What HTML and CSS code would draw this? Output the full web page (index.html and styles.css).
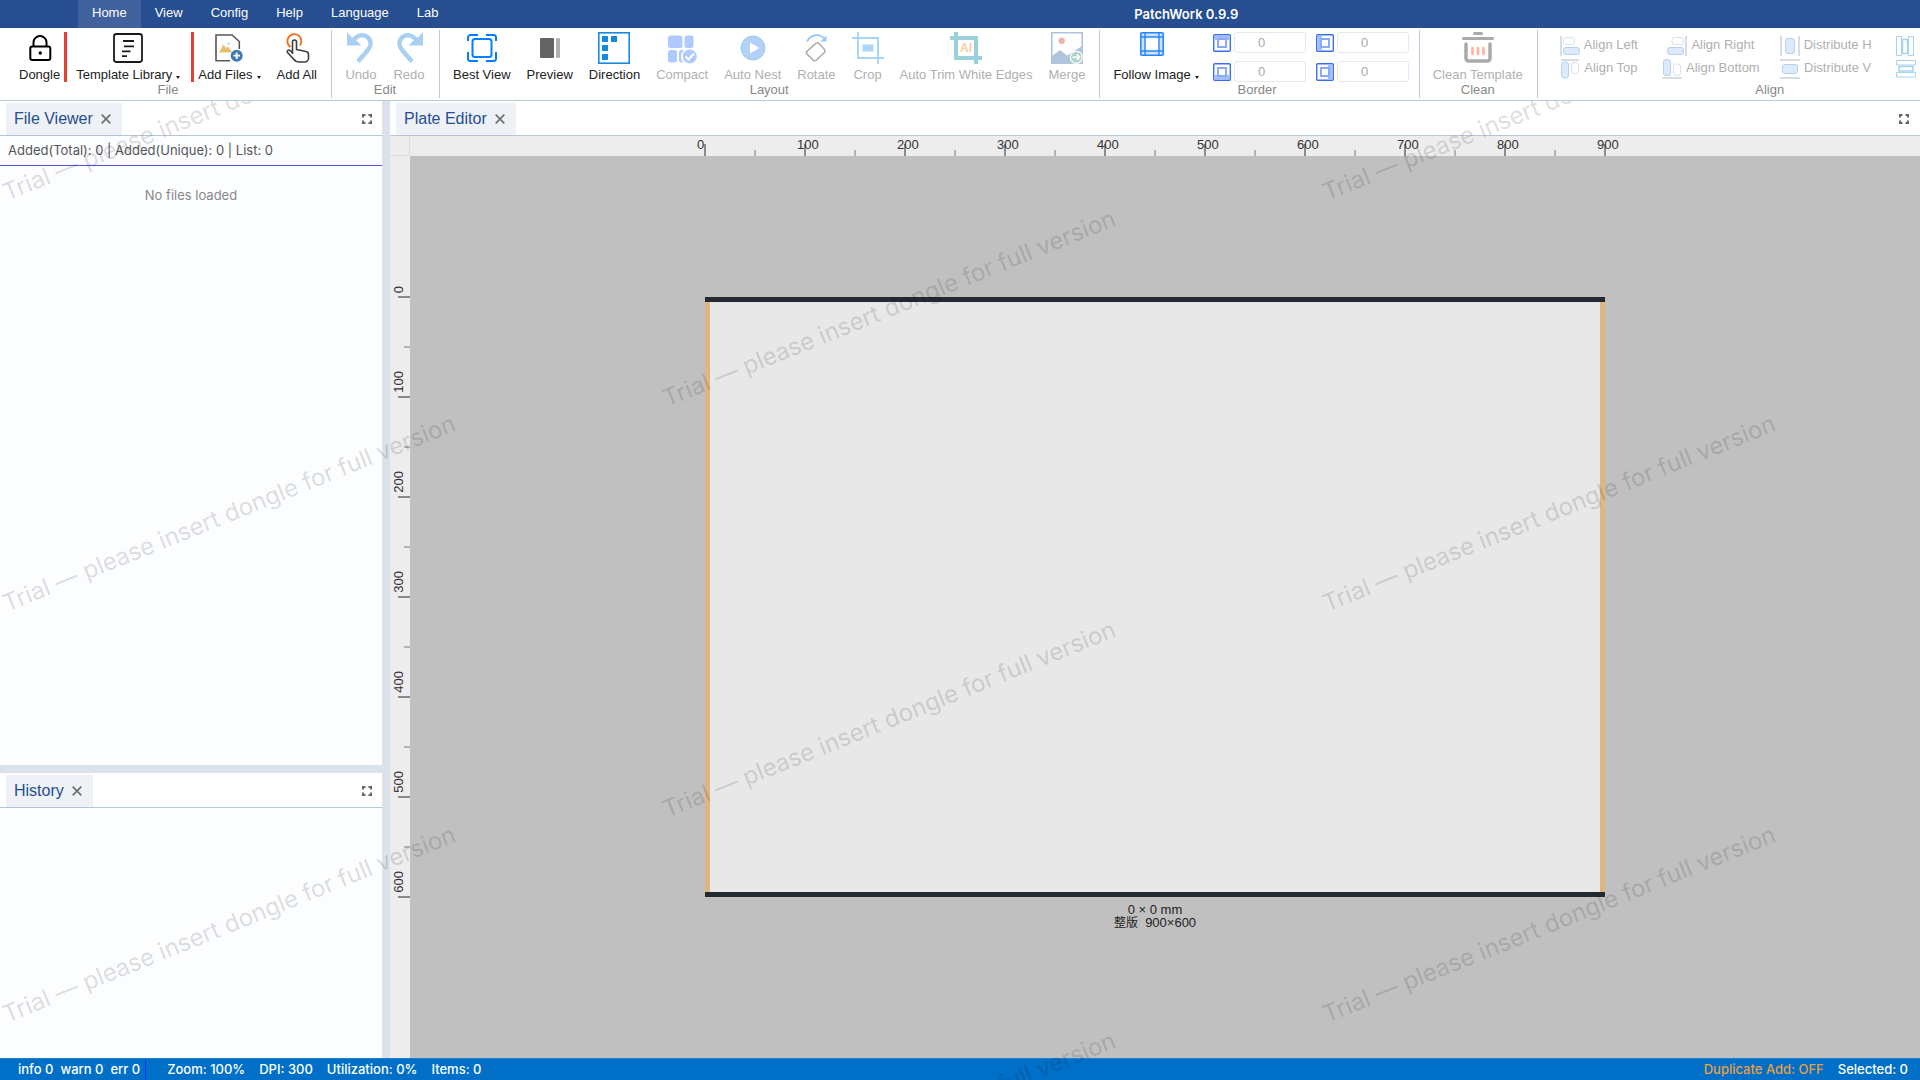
FILE: index.html
```html
<!DOCTYPE html>
<html lang="en">
	<head>
		<meta charset="utf-8">
		<title>PatchWork 0.9.9</title>
		<link rel="stylesheet" href="styles.css">
	</head>
	<body>
		<svg class="defs" aria-hidden="true">
			<symbol id="close" viewBox="0 0 10 10"><path d="M.7 .7 9.3 9.3M9.3 .7 .7 9.3" fill="none" stroke="#6f6f6f" stroke-width="1.7"/></symbol>
			<symbol id="expand" viewBox="0 0 10 10"><path d="M1 3.5V1H3.5M6.5 1H9V3.5M9 6.5V9H6.5M3.5 9H1V6.5" fill="none" stroke="#666" stroke-width="2"/></symbol>
			<symbol id="undo" viewBox="0 0 32 32"><path d="M2 0V13.5H16.5L12 9L6 4.500Z" fill="#aad0f1"/><path d="M7 10C11 4 17 1 22.500 5C27 9 26 14.500 22.500 18.500L13 29.500" fill="none" stroke="#aad0f1" stroke-width="4.500"/></symbol>
			<symbol id="edge" viewBox="0 0 18 18"><rect x=".7" y=".7" width="16.600" height="16.600" rx="1" fill="#fff" stroke="#3b6fee" stroke-width="1.400"/><rect x="1.400" y="1.400" width="15.200" height="4.600" fill="#a3bdf9"/><rect x="5" y="5" width="8" height="8" fill="#fff" stroke="#8aaaf6" stroke-width="2"/></symbol>
		</svg>

		<header class="menubar">
			<nav class="menu">
				<a class="active" href="#">Home</a>
				<a href="#">View</a>
				<a href="#">Config</a>
				<a href="#">Help</a>
				<a href="#">Language</a>
				<a href="#">Lab</a>
			</nav>
			<h1 class="title">PatchWork 0.9.9</h1>
		</header>

		<div class="ribbon">
			<section class="group group-file">
				<div class="items">
					<button class="tool mark">
						<svg viewBox="0 0 32 32"><g fill="none" stroke="#000" stroke-width="2"><rect x="6.300" y="14.500" width="20" height="13.500" rx="2"/><path d="M9.500 14V10.500A6.500 6.500 0 0 1 22.500 10.500V14"/></g><circle cx="16.300" cy="21" r="1.700"/></svg>
						<span>Dongle</span>
					</button>
					<button class="tool mark mark-wide">
						<svg viewBox="0 0 32 32"><rect x="2" y="2" width="28" height="28" rx="2.500" fill="none" stroke="#1b1b1b" stroke-width="1.800"/><path d="M11 9H22M12 14.300H22M10 19.300H18.500M10 24.200H15" stroke="#1b1b1b" stroke-width="1.800"/></svg>
						<span class="drop">Template Library</span>
					</button>
					<button class="tool tool-tight">
						<svg viewBox="0 0 32 32"><path d="M17 28.700H3V3H19L26.300 9.500V17" fill="none" stroke="#585858" stroke-width="1.600"/><path d="M6 20.500 10.500 12.500 13 16 15 14.500 19.500 20.500Z" fill="#e5bd71"/><circle cx="15.600" cy="11.700" r="1.300" fill="#b7e2f6"/><circle cx="23.700" cy="23.700" r="6" fill="#3f78b6"/><path d="M20.500 23.700H27M23.700 20.500V27" stroke="#fff" stroke-width="1.800"/></svg>
						<span class="drop">Add Files</span>
					</button>
					<button class="tool">
						<svg viewBox="0 0 32 32"><path d="M9.500 15A7 7 0 1 1 18.800 13.500" fill="none" stroke="#f26f21" stroke-width="1.900"/><path d="M11.500 22V10A2 2 0 0 1 15.500 10V17.500L25 19.500A3 3 0 0 1 27.500 22.500V26A4 4 0 0 1 23.500 30H18C15 30 14 29 12.500 27L6.500 20.500C5.500 19 7.500 17 9.500 18.800L11.500 21" fill="#fff" stroke="#3d3d3d" stroke-width="1.600" stroke-linejoin="round"/></svg>
						<span>Add All</span>
					</button>
				</div>
				<h2>File</h2>
			</section>

			<section class="group">
				<div class="items">
					<button class="tool" disabled>
						<svg><use href="#undo"/></svg>
						<span>Undo</span>
					</button>
					<button class="tool" disabled>
						<svg class="flip"><use href="#undo"/></svg>
						<span>Redo</span>
					</button>
				</div>
				<h2>Edit</h2>
			</section>

			<section class="group">
				<div class="items">
					<button class="tool">
						<svg viewBox="0 0 32 32"><g fill="none" stroke="#087dff" stroke-width="2"><path d="M2 9V5.500A2.500 2.500 0 0 1 4.500 3H12M20 3H27.500A2.500 2.500 0 0 1 30 5.500V9M30 20V26.500A2.500 2.500 0 0 1 27.500 29H20M12 29H4.500A2.500 2.500 0 0 1 2 26.500V20"/><rect x="6.500" y="7" width="19" height="18" rx="2.500"/></g></svg>
						<span>Best View</span>
					</button>
					<button class="tool">
						<svg viewBox="0 0 32 32"><rect x="6" y="6" width="14" height="20" rx="1" fill="#646464"/><rect x="22" y="6" width="4" height="20" rx="1" fill="#b0b0b0"/></svg>
						<span>Preview</span>
					</button>
					<button class="tool">
						<svg viewBox="0 0 32 32"><rect x=".8" y=".8" width="30.400" height="30.400" fill="#fff" stroke="#198bdc" stroke-width="1.600"/><path d="M4 4h6v6H4zM13 4h6v6H13zM4 13h6v6H4zM4 22h6v6H4z" fill="#168ad8"/></svg>
						<span>Direction</span>
					</button>
					<button class="tool" disabled>
						<svg viewBox="0 0 32 32"><g fill="#b0c9ff"><rect x="2" y="3.500" width="14.500" height="12.500" rx="2.500"/><rect x="18.500" y="3.500" width="9" height="12.500" rx="2.500"/><rect x="2" y="18" width="9" height="12.500" rx="2.500"/><path d="M18 18H15A2.300 2.300 0 0 0 13 20.500V28A2.300 2.300 0 0 0 15 30.500H17A9 9 0 0 1 18 18"/><circle cx="23.700" cy="24.500" r="7"/></g><path d="M19.500 24.500 22.500 27.500 28 21.500" fill="none" stroke="#fff" stroke-width="2"/></svg>
						<span>Compact</span>
					</button>
					<button class="tool" disabled>
						<svg viewBox="0 0 32 32"><circle cx="16" cy="16" r="12" fill="#b1d1f8" stroke="#9fc4ef"/><path d="M13 10.500V21.500L22 16Z" fill="#fff"/></svg>
						<span>Auto Nest</span>
					</button>
					<button class="tool" disabled>
						<svg viewBox="0 0 32 32"><path d="M7 9.500C11 2 20 1 25 7.500" fill="none" stroke="#99c8fb" stroke-width="1.800"/><path d="M26.500 3.500V9.500H20.500Z" fill="#99c8fb"/><path d="M7 19.300 15.500 11.600Q17.500 10 19 11.600L24.500 17.500Q25.700 19 24.400 20.500L16.500 28Q14.500 29.500 13 28L7 22Q5.700 20.500 7 19.300Z" fill="none" stroke="#aaa" stroke-width="1.500"/></svg>
						<span>Rotate</span>
					</button>
					<button class="tool" disabled>
						<svg viewBox="0 0 32 32"><path d="M0 6H26V32M6 0V26H32" fill="none" stroke="#a8d6fb" stroke-width="2"/><rect x="10.500" y="12.500" width="11" height="7" fill="#a8d6fb"/></svg>
						<span>Crop</span>
					</button>
					<button class="tool" disabled>
						<svg viewBox="0 0 32 32"><path d="M0 6H26V32M6 0V26H32" fill="none" stroke="#9ad1dc" stroke-width="4"/><text class="ai" x="16" y="20" text-anchor="middle">AI</text></svg>
						<span>Auto Trim White Edges</span>
					</button>
					<button class="tool" disabled>
						<svg viewBox="0 0 32 32"><path d="M.8 .8H31.200V31.200H.8Z" fill="#fff" stroke="#b0c4dc" stroke-width="1.600"/><circle cx="10.700" cy="8.700" r="3.200" fill="#efb5aa"/><path d="M1 24 9 18 16 23.500 31 14V31H1Z" fill="#b0c4dc"/><circle cx="25.300" cy="25.300" r="6" fill="#b0d2c3" stroke="#fff" stroke-width="1.200"/><path d="M21.500 25.300H28M25.800 22.500 28.700 25.300 25.800 28" fill="none" stroke="#fff" stroke-width="1.600"/></svg>
						<span>Merge</span>
					</button>
				</div>
				<h2>Layout</h2>
			</section>

			<section class="group group-border">
				<div class="items">
					<button class="tool tool-small">
						<svg viewBox="0 0 24 24"><rect x=".8" y=".8" width="22.400" height="22.400" rx="1" fill="#cfe3ff" stroke="#2488ff" stroke-width="1.600"/><rect x="5.500" y="5.500" width="13" height="13" fill="#fff"/><path d="M5 0V24M19 0V24M0 5H24M0 19H24" stroke="#2488ff" stroke-width="1.400"/></svg>
						<span class="drop">Follow Image</span>
					</button>
					<div class="edges">
						<label><svg aria-label="Top"><use href="#edge"/></svg><input type="text" value="0" disabled></label>
						<label><svg class="edge-left" aria-label="Left"><use href="#edge"/></svg><input type="text" value="0" disabled></label>
						<label><svg class="edge-bottom" aria-label="Bottom"><use href="#edge"/></svg><input type="text" value="0" disabled></label>
						<label><svg class="edge-right" aria-label="Right"><use href="#edge"/></svg><input type="text" value="0" disabled></label>
					</div>
				</div>
				<h2>Border</h2>
			</section>

			<section class="group">
				<div class="items">
					<button class="tool" disabled>
						<svg viewBox="0 0 32 32"><g fill="none" stroke="#aaa"><path d="M12.500 1.500H19.500M1.500 6.500H30.500" stroke-width="3" stroke-linecap="round"/><path d="M4 12V26Q4 29 7 29H25Q28 29 28 26V12" stroke-width="3.500" stroke-linecap="round"/></g><path d="M10.500 16V22M16 16V22M21.500 16V22" stroke="#ffb39f" stroke-width="2.600" stroke-linecap="round"/></svg>
						<span>Clean Template</span>
					</button>
				</div>
				<h2>Clean</h2>
			</section>

			<section class="group group-align">
				<div class="items">
					<div class="aligns">
						<button disabled><svg viewBox="0 0 20 20"><path d="M1 0V20" stroke="#d6dde6" stroke-width="2"/><rect x="3.500" y="1.500" width="11" height="7" rx="2.500" fill="#fff" stroke="#dbe1ea"/><rect x="3.500" y="11.500" width="16" height="7" rx="2.500" fill="#dceafb" stroke="#b4d0f2"/></svg>Align Left</button>
						<button disabled><svg viewBox="0 0 20 20"><path d="M1 1H19" stroke="#d6dde6" stroke-width="2"/><rect x="1.500" y="3" width="7" height="16" rx="2.500" fill="#dceafb" stroke="#b4d0f2"/><rect x="11.500" y="3.500" width="7" height="11" rx="2.500" fill="#fff" stroke="#dbe1ea"/></svg>Align Top</button>
					</div>
					<div class="aligns aligns-edge">
						<button disabled><svg viewBox="0 0 20 20"><path d="M19 0V20" stroke="#d6dde6" stroke-width="2"/><rect x="5" y="1.500" width="11.500" height="7" rx="2.500" fill="#fff" stroke="#dbe1ea"/><rect x=".5" y="11.500" width="16" height="7" rx="2.500" fill="#dceafb" stroke="#b4d0f2"/></svg>Align Right</button>
						<button disabled><svg viewBox="0 0 20 20"><path d="M0 19H20" stroke="#d6dde6" stroke-width="2"/><rect x="1.500" y=".5" width="7" height="16" rx="2.500" fill="#dceafb" stroke="#b4d0f2"/><rect x="11.500" y="5" width="7" height="11.500" rx="2.500" fill="#fff" stroke="#dbe1ea"/></svg>Align Bottom</button>
					</div>
					<div class="aligns">
						<button disabled><svg viewBox="0 0 20 20"><path d="M1 0V20M19 0V20" stroke="#d6dde6" stroke-width="2"/><rect x="5.500" y="2.500" width="9" height="15" rx="2.500" fill="#dceafb" stroke="#b4d0f2"/></svg>Distribute H</button>
						<button disabled><svg viewBox="0 0 20 20"><path d="M0 1H20M0 19H20" stroke="#d6dde6" stroke-width="2"/><rect x="2.500" y="5.500" width="15" height="9" rx="2.500" fill="#dceafb" stroke="#b4d0f2"/></svg>Distribute V</button>
					</div>
					<div class="aligns aligns-last">
						<button disabled aria-label="Equal width"><svg viewBox="0 0 20 20"><g fill="#fff" stroke="#a6d3ef"><path d="M.5 .5H5.500V19.500H.5ZM12.500 .5H17.500V19.500H12.500Z"/><path d="M6.500 3.500H11.500V17.500H6.500Z" stroke-width="1.500"/></g></svg></button>
						<button disabled aria-label="Equal height"><svg viewBox="0 0 20 20"><g fill="#fff" stroke="#a6d3ef"><path d="M.5 1.500H19.500V6H.5ZM.5 13.500H19.500V18H.5Z"/><path d="M3 7.500H17V12H3Z" stroke-width="1.500"/></g></svg></button>
					</div>
				</div>
				<h2>Align</h2>
			</section>
		</div>

		<main class="workspace">
			<aside class="sidebar">
				<section class="panel viewer">
					<div class="panel-head">
						<div class="tab">File Viewer<button aria-label="Close"><svg><use href="#close"/></svg></button></div>
						<button aria-label="Expand"><svg><use href="#expand"/></svg></button>
					</div>
					<p class="counts">Added(Total): 0 | Added(Unique): 0 | List: 0</p>
					<p class="empty">No files loaded</p>
				</section>
				<section class="panel history">
					<div class="panel-head">
						<div class="tab">History<button aria-label="Close"><svg><use href="#close"/></svg></button></div>
						<button aria-label="Expand"><svg><use href="#expand"/></svg></button>
					</div>
				</section>
			</aside>

			<section class="panel editor">
				<div class="panel-head">
					<div class="tab">Plate Editor<button aria-label="Close"><svg><use href="#close"/></svg></button></div>
					<button aria-label="Expand"><svg><use href="#expand"/></svg></button>
				</div>
				<div class="board">
					<div class="corner"></div>
					<div class="ruler ruler-h">
						<div class="scale">
							<span>0</span><span>100</span><span>200</span><span>300</span><span>400</span><span>500</span><span>600</span><span>700</span><span>800</span><span class="end">900</span>
						</div>
					</div>
					<div class="ruler ruler-v">
						<div class="scale">
							<span class="end">0</span><span>100</span><span>200</span><span>300</span><span>400</span><span>500</span><span>600</span>
						</div>
					</div>
					<div class="canvas">
						<div class="plate">
							<div class="sheet"></div>
							<div class="plate-info">
								<div>0 × 0 mm</div>
								<div><span class="zh" lang="zh">整版</span>&nbsp; 900×600</div>
							</div>
						</div>
					</div>
				</div>
			</section>
		</main>

		<footer class="status">
			<div class="log"><span>info 0</span><span>warn 0</span><span>err 0</span></div>
			<div class="facts"><span>Zoom: 100%</span><span>DPI: 300</span><span>Utilization: 0%</span><span>Items: 0</span></div>
			<div class="facts facts-right"><span class="warn">Duplicate Add: OFF</span><span>Selected: 0</span></div>
		</footer>

		<svg class="watermark">
			<g>
				<text transform="translate(7 100) rotate(-22)">Trial — please insert dongle for full version</text>
				<text transform="translate(7 511) rotate(-22)">Trial — please insert dongle for full version</text>
				<text transform="translate(7 922) rotate(-22)">Trial — please insert dongle for full version</text>
				<text transform="translate(667 306) rotate(-22)">Trial — please insert dongle for full version</text>
				<text transform="translate(667 717) rotate(-22)">Trial — please insert dongle for full version</text>
				<text transform="translate(667 1128) rotate(-22)">Trial — please insert dongle for full version</text>
				<text transform="translate(1327 100) rotate(-22)">Trial — please insert dongle for full version</text>
				<text transform="translate(1327 511) rotate(-22)">Trial — please insert dongle for full version</text>
				<text transform="translate(1327 922) rotate(-22)">Trial — please insert dongle for full version</text>
			</g>
		</svg>
	</body>
</html>
```
FILE: styles.css
```css
* {box-sizing: border-box;}
body {display: flex; flex-direction: column; height: 100vh; margin: 0; overflow: hidden; font: 13px "Liberation Sans", Arial, sans-serif; color: #222;}
h1, h2, p {margin: 0; font-weight: normal;}
button {border: 0; padding: 0; background: none; font: inherit; color: inherit;}
svg {display: block; flex: none;}
.defs {position: absolute; width: 0; height: 0;}

/* menu */
.menubar {display: flex; flex: none; height: 28px; padding-left: 78px; background: #264e90; color: #fff;}
.menu {display: flex;}
.menu a {padding: 5px 14px 0; line-height: 16px; color: #fff; text-decoration: none;}
.menu a.active {background: #41629c;}
.title {flex: 1; padding-top: 6px; font: 600 13px/16px Inter, sans-serif; text-align: center;}

/* ribbon */
.ribbon {display: flex; flex: none; padding: 2px 0; border-bottom: 1px solid #b9c9dc; background: #fff; overflow: hidden;}
.group {flex: none; padding: 2px 6px 0 5px; border-right: 1px solid #b9c9dc;}
.group-file {padding-left: 11px;}
.group-border {padding-right: 10px;}
.group-align {padding: 2px 0 0 22px; border-right: 0;}
.group h2 {font-size: 13px; line-height: 16px; text-align: center; color: #888;}
.group-align h2 {padding-right: 22px;}
.items {display: flex; height: 50px;}
.tool {display: flex; flex-direction: column; align-items: center; gap: 3px; padding: 0 8px; line-height: 15px; white-space: nowrap;}
.tool:disabled, .aligns button {color: #b0b0b0;}
.tool svg {width: 32px; height: 32px; overflow: visible;}
.tool-small svg {width: 24px; height: 24px; margin: 0 8px 8px 0;}
.tool-tight {padding-left: 4px;}
.mark {padding-right: 4px; border-right: 3px solid #e34132;}
.mark-wide {padding: 0 11px 0 9px;}
.flip {transform: scaleX(-1);}
.ai {font: bold 12px "Liberation Sans", Arial, sans-serif; fill: #f9cfa0;}
.drop::after {content: ""; display: inline-block; margin-left: 4px; border: 2px solid transparent; border-top: 3px solid #222; border-bottom: 0;}

.edges {display: grid; grid-template-columns: auto auto; gap: 8px 10px; align-content: start; padding-left: 6px;}
.edges label {display: flex; align-items: center; gap: 3px;}
.edges svg {width: 18px; height: 18px;}
.edge-left {transform: rotate(-90deg);}
.edge-bottom {transform: rotate(180deg);}
.edge-right {transform: rotate(90deg);}
.edges input {width: 72px; height: 21px; padding: 0 16px 0 0; border: 1px solid #e4e8f0; border-radius: 3px; background: #fff; font: inherit; text-align: center; color: #aaa;}

.aligns {display: flex; flex-direction: column; align-items: center; gap: 3px; padding-top: 4px; margin-right: 24px;}
.aligns button {display: flex; align-items: flex-start; gap: 4px; height: 20px; line-height: 17px; white-space: nowrap;}
.aligns svg {width: 20px; height: 20px;}
.aligns-edge {margin-right: 20px;}
.aligns-last {align-items: flex-start; width: 82px;}

/* panels */
.workspace {display: flex; flex: 1; min-height: 0; background: #dbe2eb; gap: 8px;}
.sidebar {display: flex; flex-direction: column; flex: none; width: 382px; gap: 8px;}
.panel {display: flex; flex-direction: column; background: #fcfdff;}
.viewer {flex: 7;}
.history {flex: 3;}
.editor {flex: 1; min-width: 0;}
.panel-head {display: flex; justify-content: space-between; align-items: center; height: 35px; padding: 2px 10px 0 6px; border-bottom: 1px solid #b9c6d9; background: #fff;}
.editor .panel-head {padding-right: 11px;}
.panel-head svg {width: 10px; height: 10px;}
.tab {display: flex; align-items: center; align-self: stretch; gap: 8px; padding: 0 11px 0 8px; background: #eef1f6; font-size: 16px; color: #264e90;}
.counts {height: 30px; padding-left: 8px; border-bottom: 1px solid #5252e0; font: 13px/29px Inter, sans-serif; color: #555;}
.empty {padding-top: 19px; font: 13px/20px Inter, sans-serif; text-align: center; color: #888;}

/* plate editor */
.board {display: grid; flex: 1; grid-template: 20px 1fr / 20px 1fr; min-height: 0; background: #c0c0c0;}
.corner {border: solid #ddd; border-width: 0 1px 1px 0; background: #ededed;}
.ruler {display: flex; background: #ededed; color: #333; overflow: hidden;}
.scale {display: flex;}
.scale span {flex: 0 0 100px; line-height: 14px;}
.ruler-h {justify-content: center; padding-right: 20px;}
.ruler-h .scale {width: 900px;}
.ruler-h span {height: 20px; margin-left: -8px; margin-right: 8px; padding-top: 2px; background: linear-gradient(#8a8a8a, #8a8a8a) 7px 8px / 2px 12px no-repeat, linear-gradient(#b4b4b4, #b4b4b4) 57px 14px / 2px 6px no-repeat;}
.ruler-v {flex-direction: column; justify-content: center; padding-bottom: 20px;}
.ruler-v .scale {flex-direction: column; height: 600px;}
.ruler-v span {width: 20px; margin-top: -96px; margin-bottom: 96px; padding: 0 0 8px 2px; writing-mode: sideways-lr; background: linear-gradient(#8a8a8a, #8a8a8a) 8px 95px / 12px 2px no-repeat, linear-gradient(#b4b4b4, #b4b4b4) 14px 45px / 6px 2px no-repeat;}
.ruler-h .end {background-size: 2px 12px, 0 0;}
.ruler-v .end {background-size: 12px 2px, 0 0;}
.canvas {display: flex; align-items: center; justify-content: center; min-height: 0; padding: 0 20px 20px 0;}
.plate {display: flex; position: relative; width: 900px; height: 600px; border: solid #242932; border-width: 5px 0;}
.sheet {flex: 1; border: solid #deb67f; border-width: 0 5px; background: #e8e8e8;}
.plate-info {position: absolute; top: 100%; left: 0; right: 0; padding-top: 12px; line-height: 12px; text-align: center;}
.plate-info div {height: 12px;}
.zh {font: 12px/12px "Noto Sans CJK SC", sans-serif;}

/* status bar */
.status {display: flex; flex: none; height: 22px; border-top: 1px solid #1c7fd2; background: #006fc8; font: 500 13px/21px Inter, sans-serif; color: #fff;}
.log {display: flex; gap: 7px; padding: 0 5px 0 18px; border-right: 1px solid #0a32ee;}
.facts {display: flex; gap: 14px; padding-left: 21px;}
.facts-right {margin-left: auto; padding-right: 12px;}
.warn {color: #e8a040;}

.watermark {position: absolute; top: 101px; left: 0; width: 100%; height: calc(100% - 101px); pointer-events: none;}
.watermark text {font: 24px Inter, sans-serif; fill: #000; fill-opacity: .15;}
```
